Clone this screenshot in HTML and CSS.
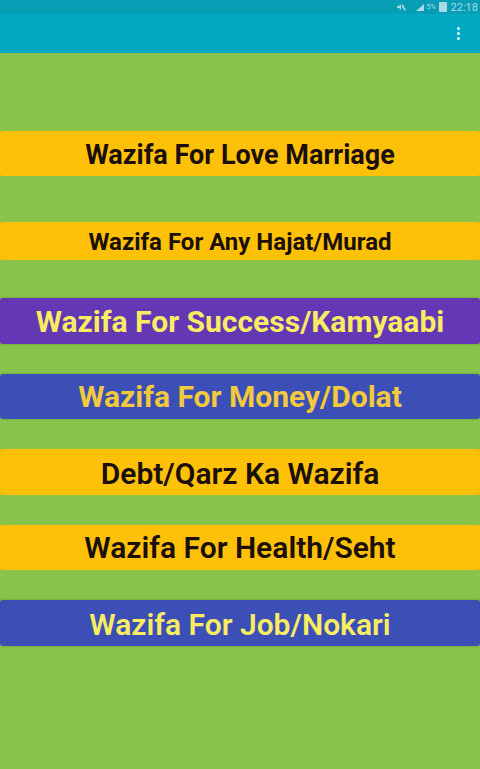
FILE: index.html
```html
<!DOCTYPE html>
<html lang="en">
<head>
    <meta charset="UTF-8">
    <meta name="viewport" content="width=device-width, initial-scale=1.0">
    <title>Wazifa</title>
    <link rel="stylesheet" href="styles.css">
</head>
<body>
    <div class="status-bar">
        <svg class="status-icon" width="9" height="8" viewBox="0 0 9 8">
            <path d="M0 3h2l2-2v6L2 5H0z M5 1l3 3-1 0 2 3-1 1-3-4z" fill="#a8dbe6"/>
        </svg>
        <svg class="status-icon signal" width="8" height="7" viewBox="0 0 8 7">
            <path d="M8 0v7H0z" fill="#a8dbe6"/>
        </svg>
        <span class="battery-pct">5%</span>
        <span class="battery"></span>
        <span class="clock">22:18</span>
    </div>
    <div class="app-bar">
        <div class="menu-dots"><i></i><i></i><i></i></div>
    </div>
    <div class="list">
        <button class="item amber dark size-27 first">Wazifa For Love Marriage</button>
        <button class="item amber dark size-24 short raise">Wazifa For Any Hajat/Murad</button>
        <button class="item purple yellow size-30 raise">Wazifa For Success/Kamyaabi</button>
        <button class="item indigo gold size-30 raise">Wazifa For Money/Dolat</button>
        <button class="item amber dark size-30 wide">Debt/Qarz Ka Wazifa</button>
        <button class="item amber dark size-30 wide raise">Wazifa For Health/Seht</button>
        <button class="item indigo yellow size-30 wide">Wazifa For Job/Nokari</button>
    </div>
</body>
</html>
```

FILE: styles.css
```css
html, body {
    height: 100%;
}
body {
    margin: 0;
    font-family: Roboto, sans-serif;
    background-color: #88c34c;
    overflow: hidden;
}
.status-bar {
    height: 14px;
    display: flex;
    align-items: center;
    justify-content: flex-end;
    padding-right: 2px;
    background-color: #079db4;
    color: #a8dbe6;
}
.status-icon {
    margin-right: 10px;
}
.status-icon.signal {
    margin-right: 3px;
}
.battery-pct {
    font-size: 7px;
    margin-right: 3px;
}
.battery {
    width: 8px;
    height: 10px;
    margin-right: 4px;
    background-color: #a8dbe6;
    border-radius: 1px;
}
.clock {
    font-size: 11px;
}
.app-bar {
    height: 39px;
    display: flex;
    align-items: center;
    justify-content: flex-end;
    padding-right: 20px;
    background-color: #02a9c3;
}
.menu-dots {
    display: flex;
    flex-direction: column;
    gap: 2px;
}
.menu-dots i {
    display: block;
    width: 3px;
    height: 3px;
    border-radius: 50%;
    background-color: #e6f7fa;
}
.list {
    display: flex;
    flex-direction: column;
    padding-top: 77.5px;
}
.item {
    display: block;
    width: 100%;
    height: 45.5px;
    margin: 0 0 30px;
    padding: 3px 0 0;
    border: none;
    border-radius: 3px;
    font-family: Roboto, sans-serif;
    font-weight: 700;
    text-align: center;
    white-space: nowrap;
}
.first {
    margin-bottom: 46px;
}
.short {
    height: 38px;
    margin-bottom: 38px;
}
.wide {
    font-weight: 600;
}
.raise {
    padding-top: 1px;
}
.amber { background-color: #ffc107; box-shadow: 0 0 1px #d9c22a; }
.purple { background-color: #6437b5; box-shadow: 0 0 2px rgba(0, 0, 0, 0.35); }
.indigo { background-color: #3b4fb6; box-shadow: 0 0 2px rgba(0, 0, 0, 0.35); }
.dark { color: #1a0f0a; }
.yellow { color: #f8ec62; }
.gold { color: #f3c93c; }
.size-24 { font-size: 24px; }
.size-27 { font-size: 27px; }
.size-30 { font-size: 30px; }
```
